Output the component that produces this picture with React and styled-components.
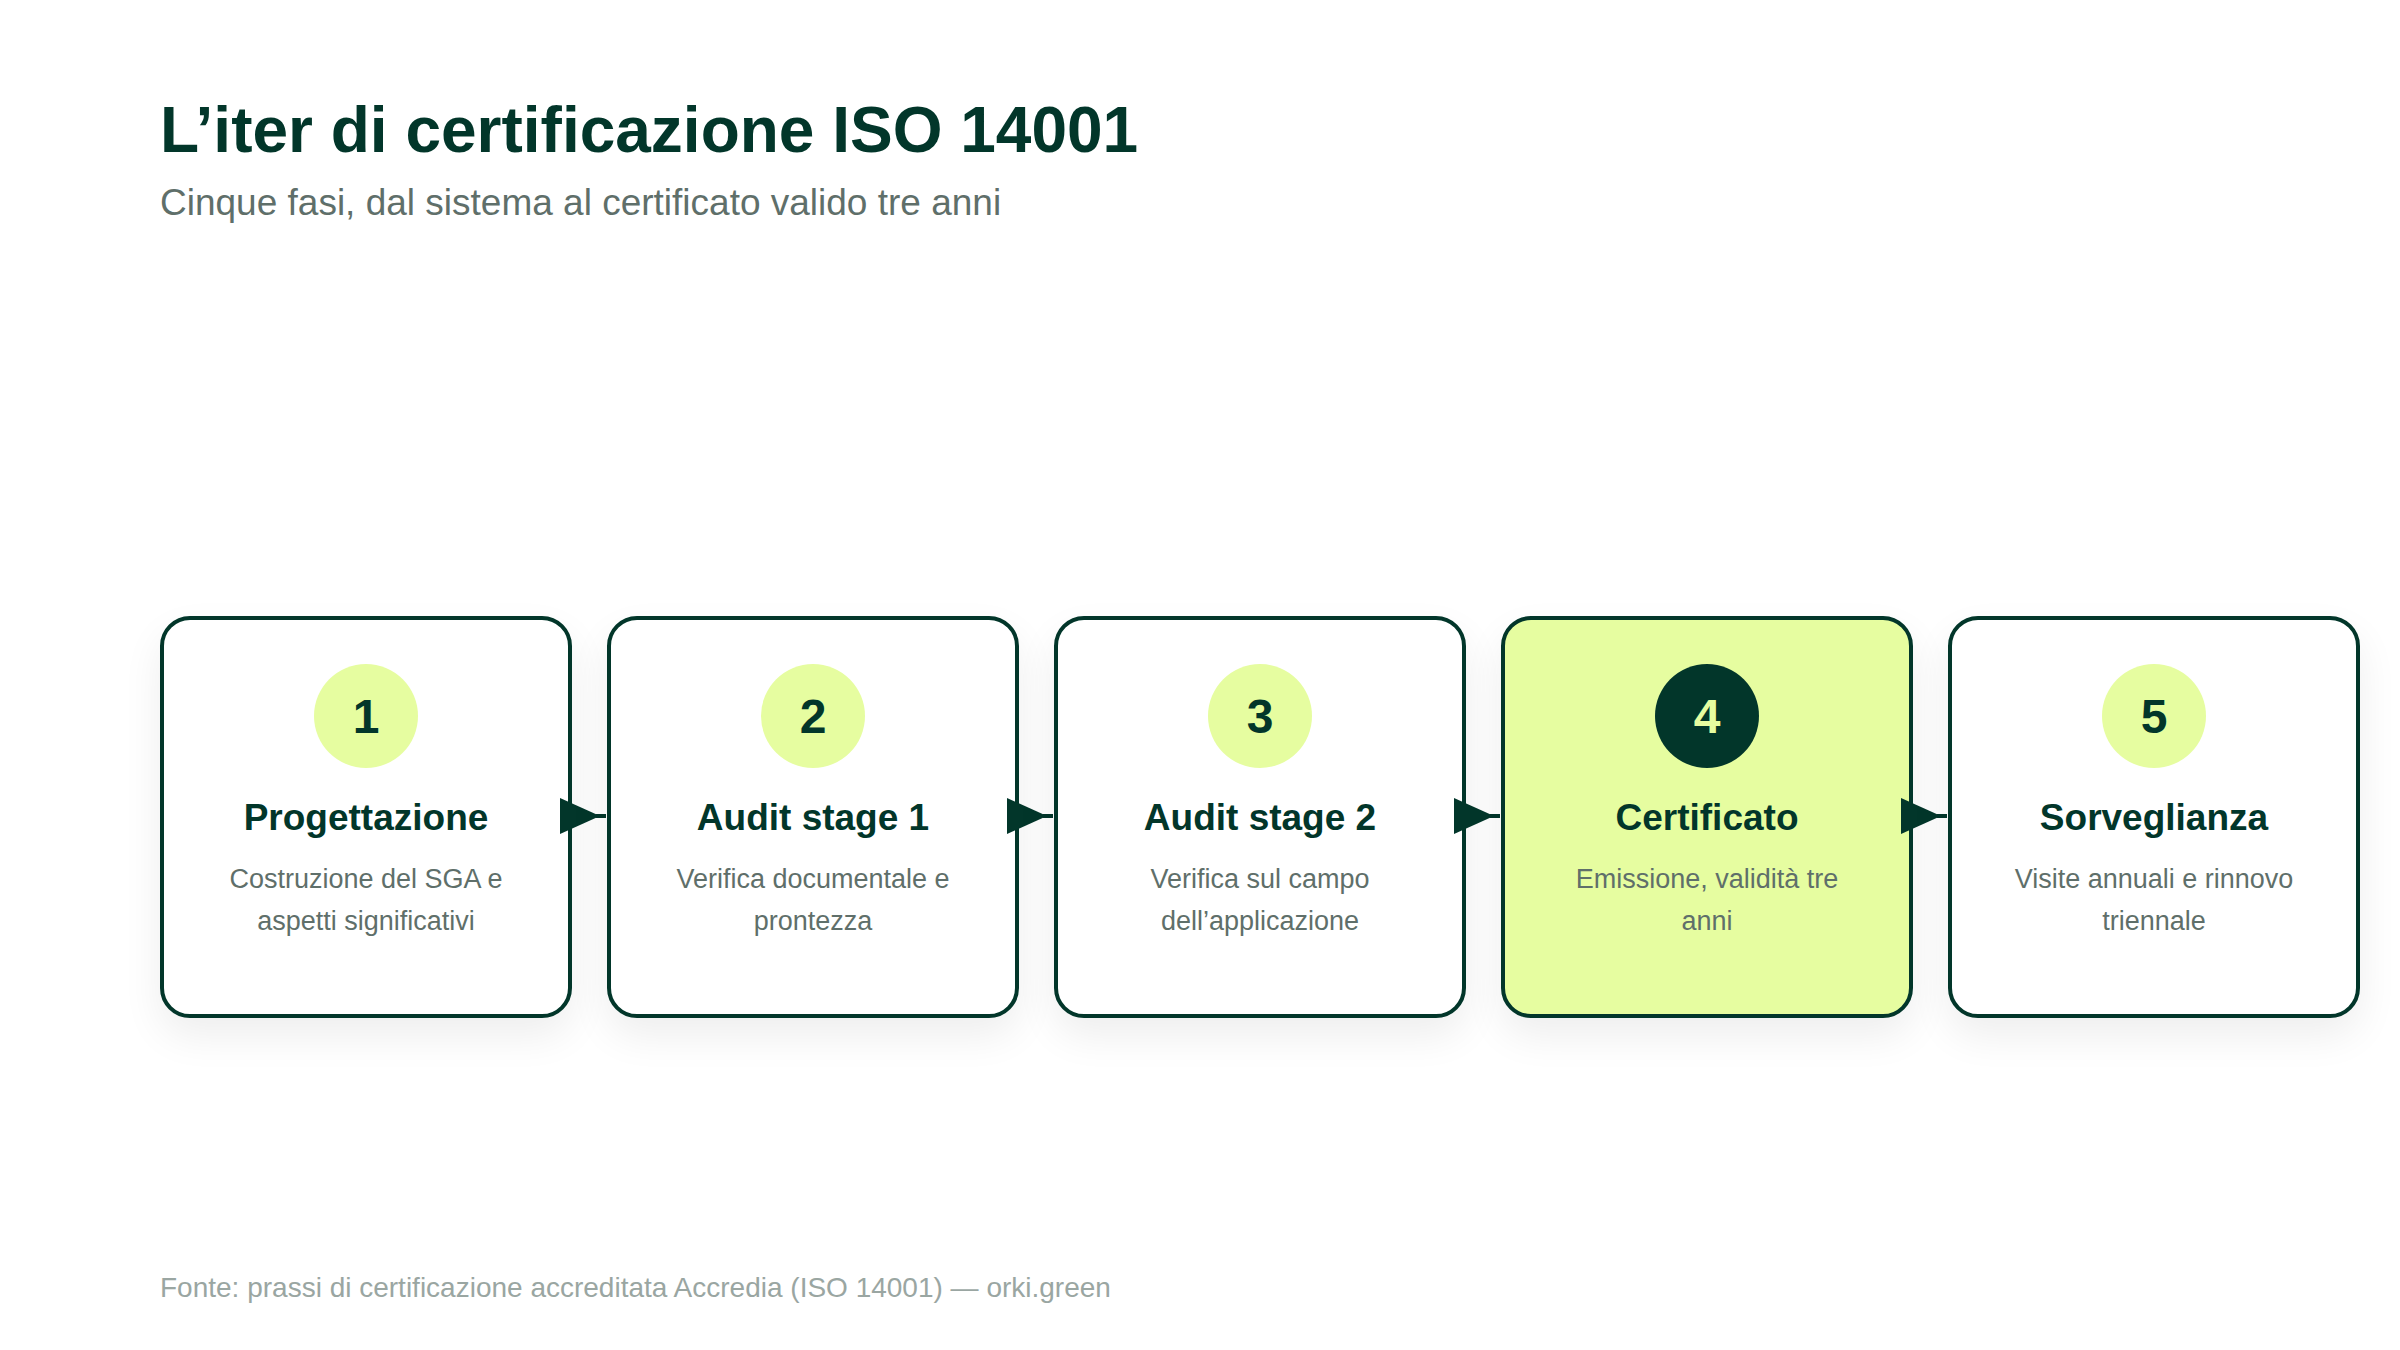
import React from "react";
import styled, { createGlobalStyle } from "styled-components";

const Global = createGlobalStyle`
  html, body { margin: 0; padding: 0; background: #fff; }
  body { font-family: "Liberation Sans", Arial, sans-serif; }
`;

const Page = styled.div`
  width: 2400px; height: 1350px; box-sizing: border-box;
  padding: 88px 0 0 160px; display: flex; flex-direction: column;
`;
const Title = styled.h1`
  margin: 0; font-size: 64px; font-weight: 700; color: #02362a; line-height: 84px;
`;
const Sub = styled.p`
  margin: 6px 0 0; font-size: 37px; color: #5f6f6a; line-height: 50px;
`;
const Row = styled.div`
  display: flex; gap: 35px; margin-top: 388px;
`;
const Card = styled.div`
  position: relative; width: 412px; height: 402px; box-sizing: border-box;
  border: 4px solid #02362a; border-radius: 30px;
  background: ${p => (p.$hl ? "#e6fda0" : "#fff")};
  box-shadow: 0 18px 40px rgba(0,0,0,0.07);
  display: flex; flex-direction: column; align-items: center;
  padding: 44px 30px 0; text-align: center;
`;
const Circle = styled.div`
  width: 104px; height: 104px; border-radius: 50%;
  background: ${p => (p.$hl ? "#02362a" : "#e6fda0")};
  color: ${p => (p.$hl ? "#e6fda0" : "#02362a")};
  display: flex; align-items: center; justify-content: center;
  font-size: 48px; font-weight: 700;
`;
const Name = styled.div`
  margin-top: 26px; font-size: 37px; font-weight: 700; color: #02362a; line-height: 48px;
`;
const Desc = styled.div`
  margin-top: 16px; font-size: 27px; color: #5f6f6a; line-height: 42px; max-width: 320px;
`;
const Arrow = styled.svg`
  position: absolute; left: 100%; top: 178px; margin-left: -12px; overflow: visible;
`;
const Foot = styled.div`
  margin-top: auto; margin-bottom: 46px; font-size: 28px; color: #9aa6a2;
`;

const steps = [
  ["1", "Progettazione", "Costruzione del SGA e aspetti significativi"],
  ["2", "Audit stage 1", "Verifica documentale e prontezza"],
  ["3", "Audit stage 2", "Verifica sul campo dell’applicazione"],
  ["4", "Certificato", "Emissione, validità tre anni", true],
  ["5", "Sorveglianza", "Visite annuali e rinnovo triennale"],
];

export default function App() {
  return (
    <>
      <Global />
      <Page>
        <Title>L’iter di certificazione ISO 14001</Title>
        <Sub>Cinque fasi, dal sistema al certificato valido tre anni</Sub>
        <Row>
          {steps.map(([n, t, d, hl], i) => (
            <Card key={n} $hl={hl}>
              <Circle $hl={hl}>{n}</Circle>
              <Name>{t}</Name>
              <Desc>{d}</Desc>
              {i < 4 && (
                <Arrow width="50" height="36" viewBox="0 0 50 36">
                  <path d="M4 0 L44 18 L4 36 Z" fill="#02362a" />
                  <line x1="40" y1="18" x2="50" y2="18" stroke="#02362a" strokeWidth="4" />
                </Arrow>
              )}
            </Card>
          ))}
        </Row>
        <Foot>Fonte: prassi di certificazione accreditata Accredia (ISO 14001) — orki.green</Foot>
      </Page>
    </>
  );
}
